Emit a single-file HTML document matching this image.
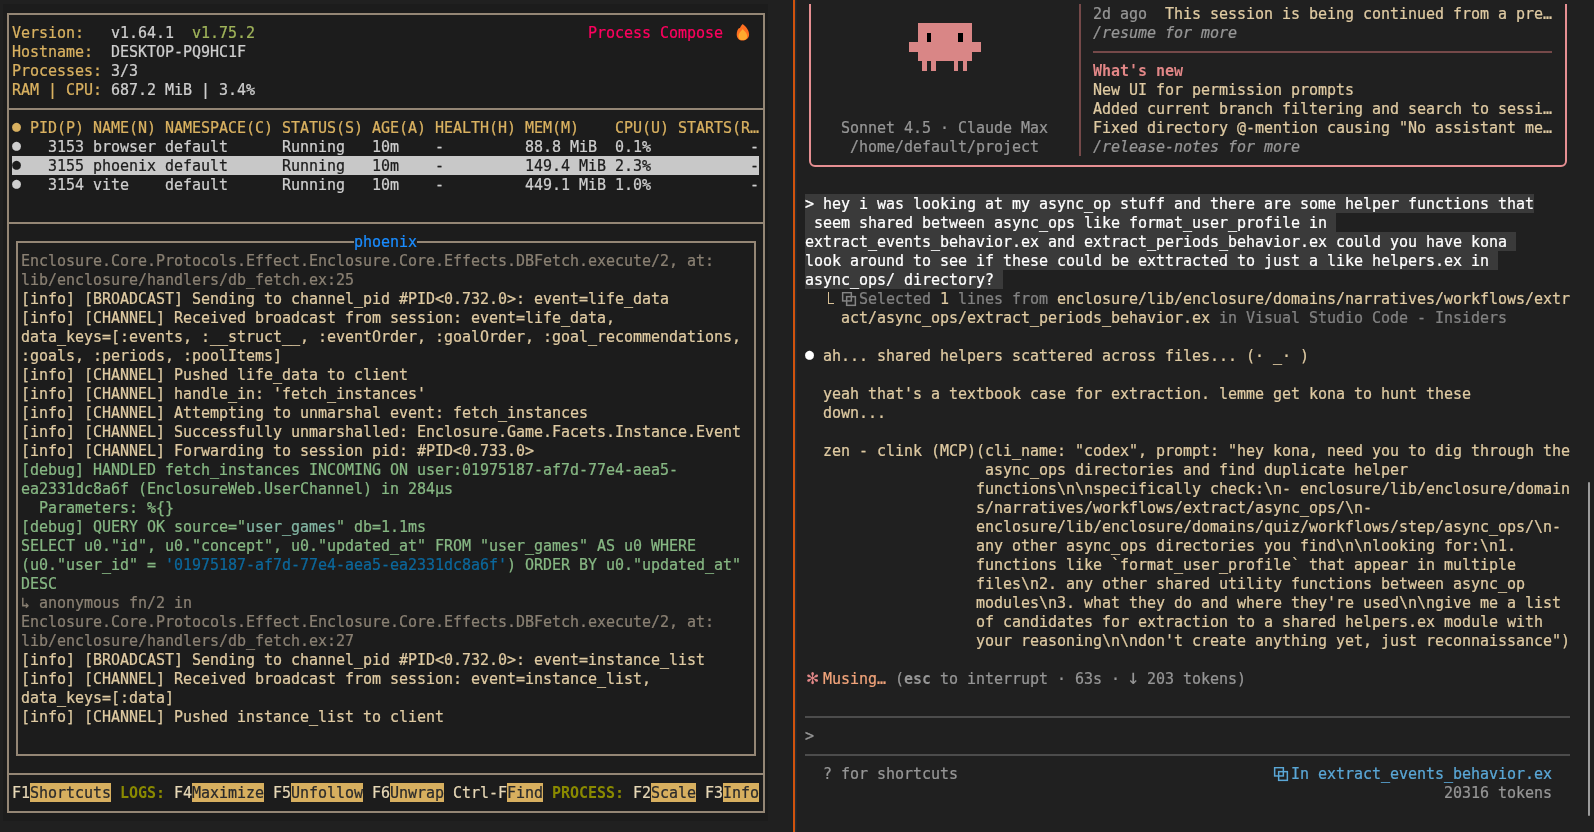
<!DOCTYPE html>
<html lang="en"><head><meta charset="utf-8"><title>Process Compose / Claude Code</title>
<style>
html,body{margin:0;padding:0;background:#202020;}
body{width:1594px;height:832px;position:relative;overflow:hidden;
 font-family:"DejaVu Sans Mono", "Liberation Mono", monospace;font-size:15px;letter-spacing:-0.0308px;line-height:19px;color:#d6d6d6;}
#wrap{position:absolute;left:0;top:0;width:1594px;height:832px;will-change:transform;}
span,i,svg.ic,.clip{position:absolute;display:block;}
.clip{overflow:hidden;}
span{height:19px;line-height:21px;white-space:pre;-webkit-text-stroke:0.24px currentColor;}
.dot{line-height:19px;margin-top:-0.7px;-webkit-text-stroke:0;}
i{font-style:normal;}
.y{color:#d9b160;} .w{color:#cecece;} .gr{color:#a0b45a;} .pc{color:#ff005f;}
.k{color:#1c1c1c;} .bl{color:#1a8cff;} .dm{color:#8a8073;} .tn{color:#dfcaa2;}
.dg{color:#86b783;} .tl{color:#82b5a2;} .ub{color:#0c689c;}
.fk{color:#e6d7b6;} .hl{color:#2b2b2b;background:#d7af5f;} .ol{color:#8a8a00;font-weight:bold;-webkit-text-stroke:0;}
.g{color:#969696;} .g2{color:#828282;} .it{font-style:italic;} .b{font-weight:bold;-webkit-text-stroke:0;} .pk{color:#e28787;}
.ast{font-size:19.5px;-webkit-text-stroke:0;width:13px;text-align:center;margin:-2px 0 0 1px;} .arr{font-size:21px;-webkit-text-stroke:0;width:9px;text-align:center;margin:-2px 0 0 -2px;}
.ubg{color:#fff;background:#3a3a3a;} .wh{color:#fff;} .mu{color:#f0a37a;} .ib{color:#5aa7d6;}
</style></head><body>
<div id="wrap">
<div id="left">
<i style="left:3px;top:4px;width:765px;height:817px;background:#1c1c1c;"></i>
<i style="left:7px;top:13px;width:758px;height:2px;background:#948675;"></i>
<i style="left:7px;top:108px;width:758px;height:2px;background:#948675;"></i>
<i style="left:7px;top:222px;width:758px;height:2px;background:#948675;"></i>
<i style="left:7px;top:773px;width:758px;height:2px;background:#948675;"></i>
<i style="left:7px;top:811px;width:758px;height:2px;background:#948675;"></i>
<i style="left:7px;top:13px;width:2px;height:800px;background:#948675;"></i>
<i style="left:763px;top:13px;width:2px;height:800px;background:#948675;"></i>
<i style="left:16px;top:241px;width:338px;height:2px;background:#948675;"></i>
<i style="left:417px;top:241px;width:339px;height:2px;background:#948675;"></i>
<i style="left:16px;top:754px;width:740px;height:2px;background:#948675;"></i>
<i style="left:16px;top:241px;width:2px;height:515px;background:#948675;"></i>
<i style="left:754px;top:241px;width:2px;height:515px;background:#948675;"></i>
<span class="y" style="left:12px;top:23px;">Version:</span>
<span class="w" style="left:111px;top:23px;">v1.64.1</span>
<span class="gr" style="left:192px;top:23px;">v1.75.2</span>
<span class="y" style="left:12px;top:42px;">Hostname:</span>
<span class="w" style="left:111px;top:42px;">DESKTOP-PQ9HC1F</span>
<span class="y" style="left:12px;top:61px;">Processes:</span>
<span class="w" style="left:111px;top:61px;">3/3</span>
<span class="y" style="left:12px;top:80px;">RAM | CPU:</span>
<span class="w" style="left:111px;top:80px;">687.2 MiB | 3.4%</span>
<span class="pc" style="left:588px;top:23px;">Process Compose</span>
<svg class="ic" style="left:735px;top:23px" width="16" height="19" viewBox="0 0 16 19"><path d="M7.7 1.1 C9.5 2.6 14.1 6.5 14.1 11.2 C14.1 15.1 11.2 17.5 7.7 17.5 C4.2 17.5 1.7 15.1 1.7 11.4 C1.7 8.6 2.8 6.2 4.1 5 C4.3 5.2 4.6 5.2 4.9 4.9 C5.6 3.6 6.6 2.2 7.7 1.1 Z" fill="#ff6f20"/><path d="M7.7 6.1 C9 7.8 12.2 10 12.2 13.2 C12.2 15.7 10.2 17.1 7.7 17.1 C5.2 17.1 3.5 15.7 3.5 13.2 C3.5 10 6.5 7.8 7.7 6.1 Z" fill="#ffaa2e"/></svg>
<span class="y dot" style="left:12px;top:118px;">●</span>
<span class="y" style="left:30px;top:118px;">PID(P)</span>
<span class="y" style="left:93px;top:118px;">NAME(N)</span>
<span class="y" style="left:165px;top:118px;">NAMESPACE(C)</span>
<span class="y" style="left:282px;top:118px;">STATUS(S)</span>
<span class="y" style="left:372px;top:118px;">AGE(A)</span>
<span class="y" style="left:435px;top:118px;">HEALTH(H)</span>
<span class="y" style="left:525px;top:118px;">MEM(M)</span>
<span class="y" style="left:615px;top:118px;">CPU(U)</span>
<span class="y" style="left:678px;top:118px;">STARTS(R…</span>
<i style="left:12px;top:156px;width:747px;height:19px;background:#c8c8c8;"></i>
<span class="w dot" style="left:12px;top:137px;">●</span>
<span class="w" style="left:48px;top:137px;">3153</span>
<span class="w" style="left:93px;top:137px;">browser</span>
<span class="w" style="left:165px;top:137px;">default</span>
<span class="w" style="left:282px;top:137px;">Running</span>
<span class="w" style="left:372px;top:137px;">10m</span>
<span class="w" style="left:435px;top:137px;">-</span>
<span class="w" style="left:525px;top:137px;">88.8 MiB</span>
<span class="w" style="left:615px;top:137px;">0.1%</span>
<span class="w" style="left:750px;top:137px;">-</span>
<span class="k dot" style="left:12px;top:156px;">●</span>
<span class="k" style="left:48px;top:156px;">3155</span>
<span class="k" style="left:93px;top:156px;">phoenix</span>
<span class="k" style="left:165px;top:156px;">default</span>
<span class="k" style="left:282px;top:156px;">Running</span>
<span class="k" style="left:372px;top:156px;">10m</span>
<span class="k" style="left:435px;top:156px;">-</span>
<span class="k" style="left:525px;top:156px;">149.4 MiB</span>
<span class="k" style="left:615px;top:156px;">2.3%</span>
<span class="k" style="left:750px;top:156px;">-</span>
<span class="w dot" style="left:12px;top:175px;">●</span>
<span class="w" style="left:48px;top:175px;">3154</span>
<span class="w" style="left:93px;top:175px;">vite</span>
<span class="w" style="left:165px;top:175px;">default</span>
<span class="w" style="left:282px;top:175px;">Running</span>
<span class="w" style="left:372px;top:175px;">10m</span>
<span class="w" style="left:435px;top:175px;">-</span>
<span class="w" style="left:525px;top:175px;">449.1 MiB</span>
<span class="w" style="left:615px;top:175px;">1.0%</span>
<span class="w" style="left:750px;top:175px;">-</span>
<span class="bl" style="left:354px;top:232px;">phoenix</span>
<span class="dm" style="left:21px;top:251px;">Enclosure.Core.Protocols.Effect.Enclosure.Core.Effects.DBFetch.execute/2, at:</span>
<span class="dm" style="left:21px;top:270px;">lib/enclosure/handlers/db_fetch.ex:25</span>
<span class="tn" style="left:21px;top:289px;">[info] [BROADCAST] Sending to channel_pid #PID&lt;0.732.0&gt;: event=life_data</span>
<span class="tn" style="left:21px;top:308px;">[info] [CHANNEL] Received broadcast from session: event=life_data,</span>
<span class="tn" style="left:21px;top:327px;">data_keys=[:events, :__struct__, :eventOrder, :goalOrder, :goal_recommendations,</span>
<span class="tn" style="left:21px;top:346px;">:goals, :periods, :poolItems]</span>
<span class="tn" style="left:21px;top:365px;">[info] [CHANNEL] Pushed life_data to client</span>
<span class="tn" style="left:21px;top:384px;">[info] [CHANNEL] handle_in: 'fetch_instances'</span>
<span class="tn" style="left:21px;top:403px;">[info] [CHANNEL] Attempting to unmarshal event: fetch_instances</span>
<span class="tn" style="left:21px;top:422px;">[info] [CHANNEL] Successfully unmarshalled: Enclosure.Game.Facets.Instance.Event</span>
<span class="tn" style="left:21px;top:441px;">[info] [CHANNEL] Forwarding to session pid: #PID&lt;0.733.0&gt;</span>
<span class="dg" style="left:21px;top:460px;">[debug] HANDLED fetch_instances INCOMING ON user:01975187-af7d-77e4-aea5-</span>
<span class="dg" style="left:21px;top:479px;">ea2331dc8a6f (EnclosureWeb.UserChannel) in 284µs</span>
<span class="dg" style="left:39px;top:498px;">Parameters: %{}</span>
<span class="dg" style="left:21px;top:517px;">[debug] QUERY OK source="</span>
<span class="tl" style="left:246px;top:517px;">user_games</span>
<span class="dg" style="left:336px;top:517px;">" db=1.1ms</span>
<span class="dg" style="left:21px;top:536px;">SELECT u0."id", u0."concept", u0."updated_at" FROM "user_games" AS u0 WHERE</span>
<span class="dg" style="left:21px;top:555px;">(u0."user_id" = </span>
<span class="ub" style="left:165px;top:555px;">'01975187-af7d-77e4-aea5-ea2331dc8a6f'</span>
<span class="dg" style="left:507px;top:555px;">) ORDER BY u0."updated_at"</span>
<span class="dg" style="left:21px;top:574px;">DESC</span>
<span class="dm" style="left:21px;top:593px;">↳ anonymous fn/2 in</span>
<span class="dm" style="left:21px;top:612px;">Enclosure.Core.Protocols.Effect.Enclosure.Core.Effects.DBFetch.execute/2, at:</span>
<span class="dm" style="left:21px;top:631px;">lib/enclosure/handlers/db_fetch.ex:27</span>
<span class="tn" style="left:21px;top:650px;">[info] [BROADCAST] Sending to channel_pid #PID&lt;0.732.0&gt;: event=instance_list</span>
<span class="tn" style="left:21px;top:669px;">[info] [CHANNEL] Received broadcast from session: event=instance_list,</span>
<span class="tn" style="left:21px;top:688px;">data_keys=[:data]</span>
<span class="tn" style="left:21px;top:707px;">[info] [CHANNEL] Pushed instance_list to client</span>
<span class="fk" style="left:12px;top:783px;">F1</span>
<span class="hl" style="left:30px;top:783px;">Shortcuts</span>
<span class="ol" style="left:120px;top:783px;">LOGS:</span>
<span class="fk" style="left:174px;top:783px;">F4</span>
<span class="hl" style="left:192px;top:783px;">Maximize</span>
<span class="fk" style="left:273px;top:783px;">F5</span>
<span class="hl" style="left:291px;top:783px;">Unfollow</span>
<span class="fk" style="left:372px;top:783px;">F6</span>
<span class="hl" style="left:390px;top:783px;">Unwrap</span>
<span class="fk" style="left:453px;top:783px;">Ctrl-F</span>
<span class="hl" style="left:507px;top:783px;">Find</span>
<span class="ol" style="left:552px;top:783px;">PROCESS:</span>
<span class="fk" style="left:633px;top:783px;">F2</span>
<span class="hl" style="left:651px;top:783px;">Scale</span>
<span class="fk" style="left:705px;top:783px;">F3</span>
<span class="hl" style="left:723px;top:783px;">Info</span>
</div>
<div id="divider">
<i style="left:792px;top:0px;width:1px;height:832px;background:#1b1f23;"></i>
<i style="left:793px;top:0px;width:2px;height:832px;background:#cf520c;"></i>
<i style="left:795px;top:0px;width:1px;height:832px;background:#272c32;"></i>
<i style="left:796px;top:0px;width:1px;height:832px;background:#232527;"></i>
</div>
<div id="right">
<div class="clip" style="left:805px;top:4px;width:783px;height:171px"><i style="left:4px;top:-14px;width:754px;height:173px;border:2px solid #e68f92;border-radius:0 0 6px 6px;background:none"></i></div>
<i style="left:1079px;top:4px;width:2px;height:152px;background:#754949;"></i>
<i style="left:1093px;top:51px;width:459px;height:2px;background:#754949;"></i>
<i style="left:918px;top:23px;width:54px;height:38px;background:#d98686;"></i>
<i style="left:909px;top:42px;width:72px;height:10px;background:#d98686;"></i>
<i style="left:922px;top:61px;width:5px;height:10px;background:#d98686;"></i>
<i style="left:931px;top:61px;width:5px;height:10px;background:#d98686;"></i>
<i style="left:954px;top:61px;width:4px;height:10px;background:#d98686;"></i>
<i style="left:963px;top:61px;width:4px;height:10px;background:#d98686;"></i>
<i style="left:927px;top:33px;width:4px;height:9px;background:#000;"></i>
<i style="left:958px;top:33px;width:5px;height:9px;background:#000;"></i>
<span class="g" style="left:841px;top:118px;">Sonnet 4.5 · Claude Max</span>
<span class="g" style="left:850px;top:137px;">/home/default/project</span>
<span class="g" style="left:1093px;top:4px;">2d ago</span>
<span class="tn" style="left:1165px;top:4px;">This session is being continued from a pre…</span>
<span class="g it" style="left:1093px;top:23px;">/resume for more</span>
<span class="pk b" style="left:1093px;top:61px;">What's new</span>
<span class="tn" style="left:1093px;top:80px;">New UI for permission prompts</span>
<span class="tn" style="left:1093px;top:99px;">Added current branch filtering and search to sessi…</span>
<span class="tn" style="left:1093px;top:118px;">Fixed directory @-mention causing "No assistant me…</span>
<span class="g it" style="left:1093px;top:137px;">/release-notes for more</span>
<i style="left:805px;top:194px;width:729px;height:19px;background:#3a3a3a;"></i>
<i style="left:805px;top:213px;width:531px;height:19px;background:#3a3a3a;"></i>
<i style="left:805px;top:232px;width:711px;height:19px;background:#3a3a3a;"></i>
<i style="left:805px;top:251px;width:693px;height:19px;background:#3a3a3a;"></i>
<i style="left:805px;top:270px;width:198px;height:19px;background:#3a3a3a;"></i>
<span class="wh" style="left:805px;top:194px;">&gt; hey i was looking at my async_op stuff and there are some helper functions that</span>
<span class="wh" style="left:805px;top:213px;"> seem shared between async_ops like format_user_profile in </span>
<span class="wh" style="left:805px;top:232px;">extract_events_behavior.ex and extract_periods_behavior.ex could you have kona </span>
<span class="wh" style="left:805px;top:251px;">look around to see if these could be exttracted to just a like helpers.ex in </span>
<span class="wh" style="left:805px;top:270px;">async_ops/ directory? </span>
<i style="left:828px;top:292px;width:1px;height:12px;background:#d9c197;"></i>
<i style="left:828px;top:303px;width:6px;height:1px;background:#d9c197;"></i>
<svg class="ic" style="left:841px;top:292px" width="16" height="15" viewBox="0 0 16 15" fill="none" stroke="#848484" stroke-width="1.5"><rect x="1.65" y="0.65" width="8.7" height="8.3"/><rect x="5.65" y="4.65" width="8.7" height="8.7"/></svg>
<span class="g2" style="left:859px;top:289px;">Selected </span>
<span class="tn" style="left:940px;top:289px;">1</span>
<span class="g2" style="left:958px;top:289px;">lines from </span>
<span class="tn" style="left:1057px;top:289px;">enclosure/lib/enclosure/domains/narratives/workflows/extr</span>
<span class="tn" style="left:841px;top:308px;">act/async_ops/extract_periods_behavior.ex</span>
<span class="g2" style="left:1219px;top:308px;">in Visual Studio Code - Insiders</span>
<span class="wh dot" style="left:805px;top:346px;">●</span>
<span class="tn" style="left:823px;top:346px;">ah... shared helpers scattered across files... (· _· )</span>
<span class="tn" style="left:823px;top:384px;">yeah that's a textbook case for extraction. lemme get kona to hunt these</span>
<span class="tn" style="left:823px;top:403px;">down...</span>
<span class="tn" style="left:823px;top:441px;">zen - clink (MCP)(cli_name: "codex", prompt: "hey kona, need you to dig through the</span>
<span class="tn" style="left:985px;top:460px;">async_ops directories and find duplicate helper</span>
<span class="tn" style="left:976px;top:479px;">functions\n\nspecifically check:\n- enclosure/lib/enclosure/domain</span>
<span class="tn" style="left:976px;top:498px;">s/narratives/workflows/extract/async_ops/\n-</span>
<span class="tn" style="left:976px;top:517px;">enclosure/lib/enclosure/domains/quiz/workflows/step/async_ops/\n-</span>
<span class="tn" style="left:976px;top:536px;">any other async_ops directories you find\n\nlooking for:\n1.</span>
<span class="tn" style="left:976px;top:555px;">functions like `format_user_profile` that appear in multiple</span>
<span class="tn" style="left:976px;top:574px;">files\n2. any other shared utility functions between async_op</span>
<span class="tn" style="left:976px;top:593px;">modules\n3. what they do and where they're used\n\ngive me a list</span>
<span class="tn" style="left:976px;top:612px;">of candidates for extraction to a shared helpers.ex module with</span>
<span class="tn" style="left:976px;top:631px;">your reasoning\n\ndon't create anything yet, just reconnaissance")</span>
<span class="pk ast" style="left:805px;top:669px;">✻</span>
<span class="mu" style="left:823px;top:669px;">Musing…</span>
<span class="g" style="left:895px;top:669px;">(</span>
<span class="g b" style="left:904px;top:669px;">esc</span>
<span class="g" style="left:940px;top:669px;">to interrupt · 63s · </span>
<span class="g arr" style="left:1129px;top:669px;">↓</span>
<span class="g" style="left:1147px;top:669px;">203 tokens)</span>
<i style="left:805px;top:716px;width:765px;height:2px;background:#4c4c4c;"></i>
<span class="g" style="left:805px;top:726px;">&gt;</span>
<i style="left:805px;top:754px;width:765px;height:2px;background:#4c4c4c;"></i>
<span class="g" style="left:823px;top:764px;">? for shortcuts</span>
<svg class="ic" style="left:1273px;top:767px" width="16" height="15" viewBox="0 0 16 15" fill="none" stroke="#5aa7d6" stroke-width="1.5"><rect x="1.65" y="0.65" width="8.7" height="8.3"/><rect x="5.65" y="4.65" width="8.7" height="8.7"/></svg>
<span class="ib" style="left:1291px;top:764px;">In extract_events_behavior.ex</span>
<span class="g" style="left:1444px;top:783px;">20316 tokens</span>
<i style="left:1588px;top:482px;width:2px;height:334px;background:#9c9c9c;border-radius:1px"></i>
</div>
</div>
</body></html>
